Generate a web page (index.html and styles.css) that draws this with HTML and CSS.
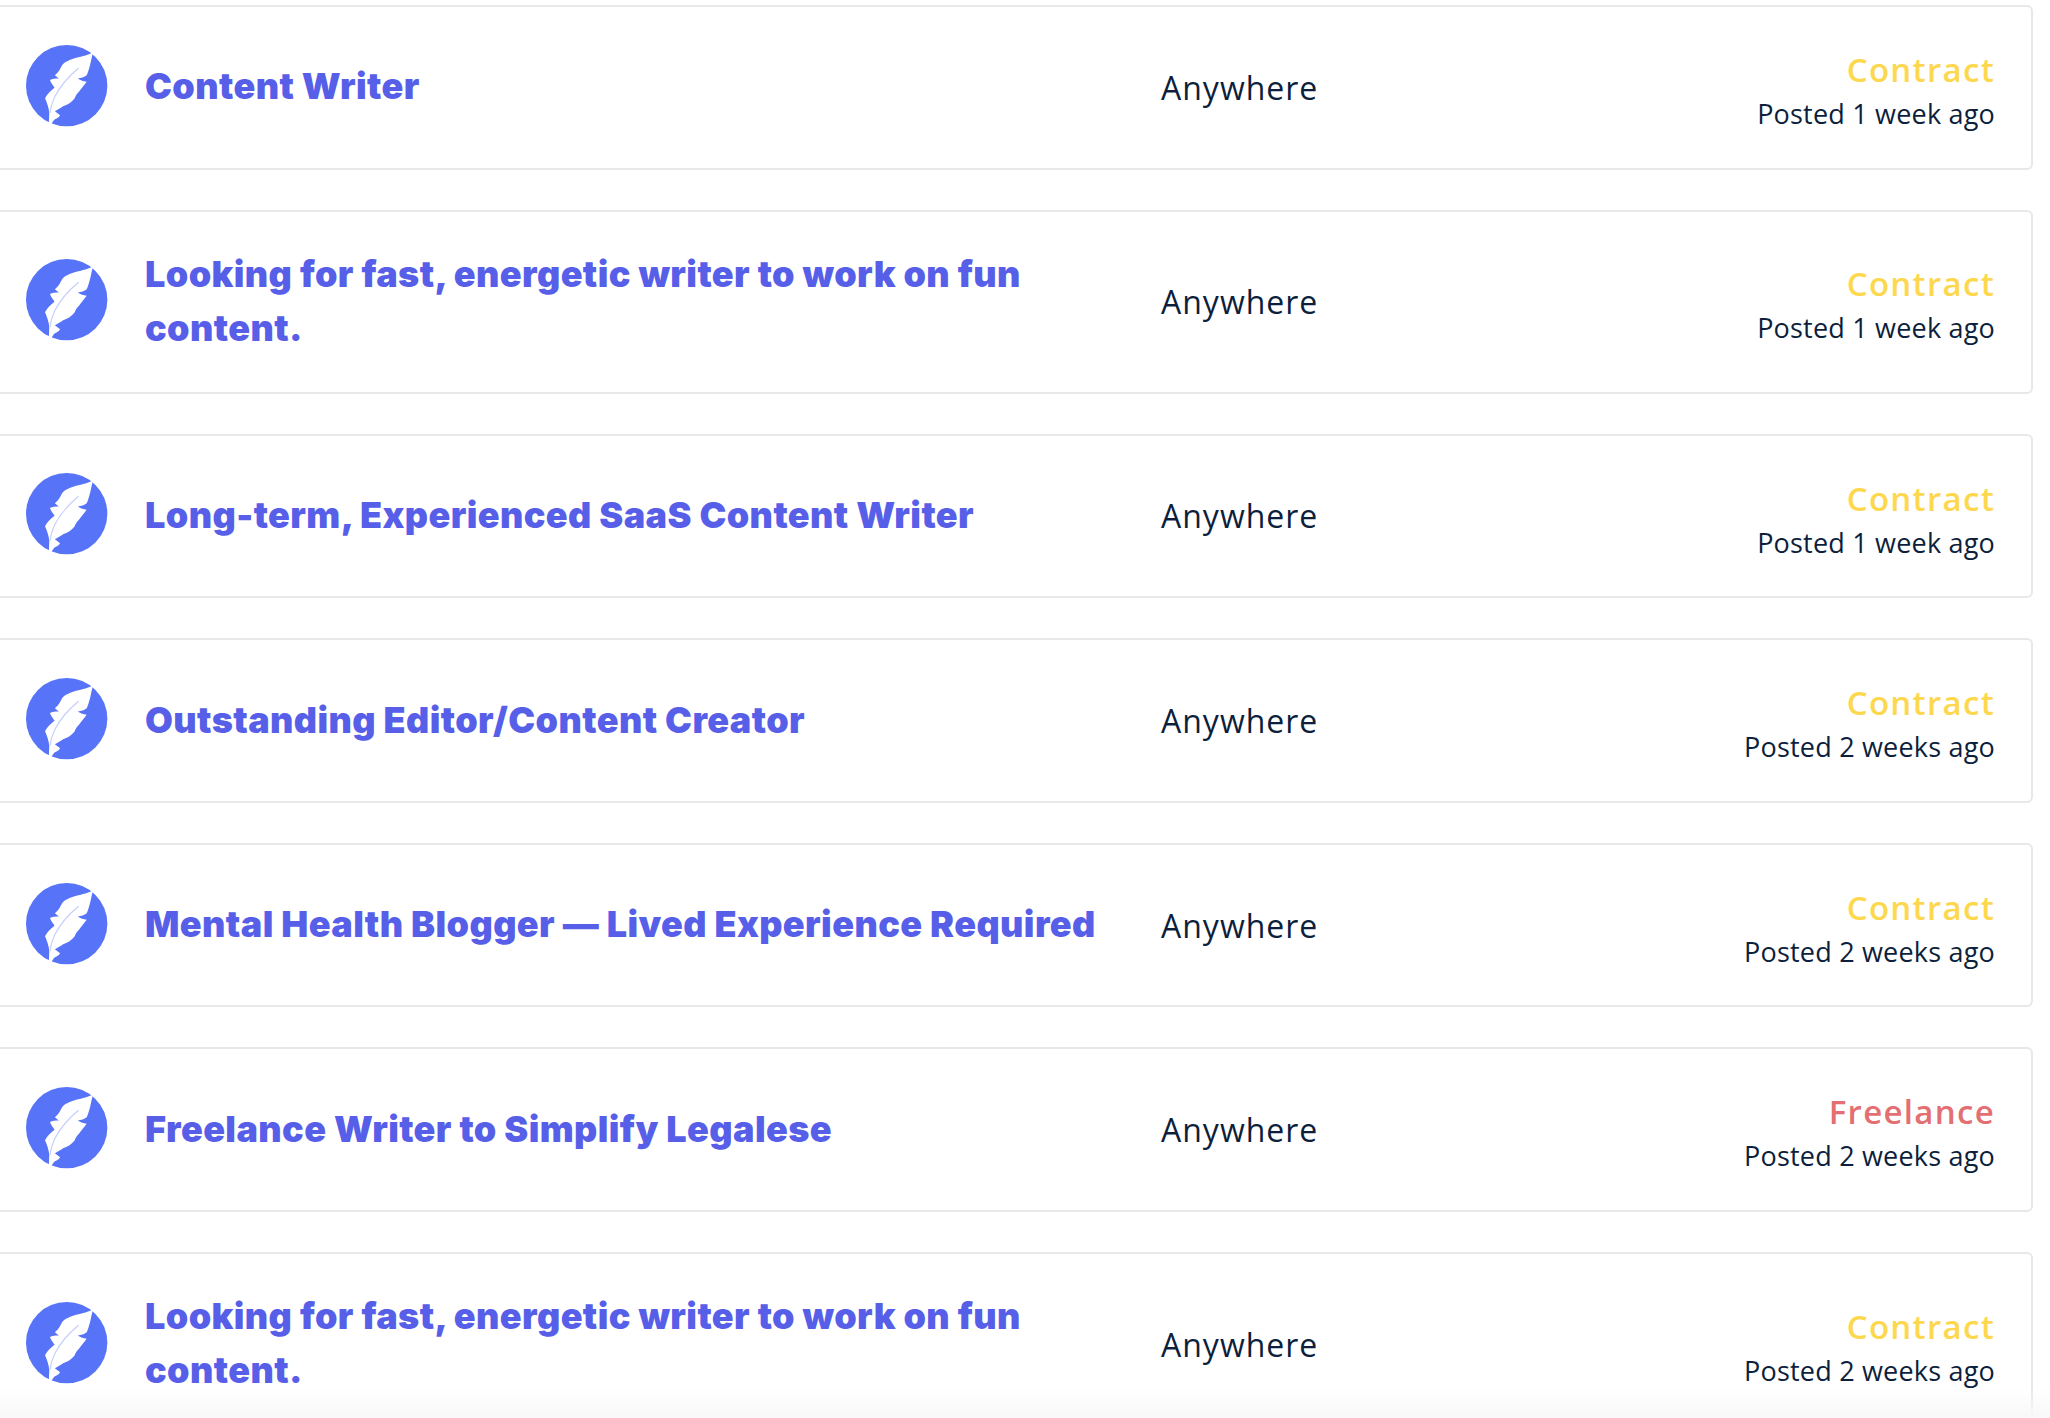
FILE: index.html
```html
<!DOCTYPE html>
<html>
<head>
    <title>Writing Jobs</title>
    <link rel="stylesheet" href="styles.css">
</head>
<body>
    <svg class="sprite" width="0" height="0">
        <symbol id="quill" viewBox="46 44 250 250">
            <circle cx="170" cy="168" r="124" fill="#5773f8"/>
            <path fill="#fff" d="M250 66 C238 74 218 78 199 83 C180 90 164 94 156 106 C150 118 145 128 134 136 L146 146 C136 146 126 146 119 151 C122 160 128 166 133 174 C122 182 110 194 104 206 C110 220 116 236 117 251 L115 296 L121 296 C123 284 127 278 132 272 C136 268 144 268 150 258 L134 246 C146 240 152 236 159 231 C172 226 184 220 194 207 C198 198 202 192 208 186 C214 176 224 166 231 156 C222 154 212 152 204 146 C214 144 224 142 231 136 C240 118 244 92 250 66 Z"/>
            <path fill="none" stroke="#c5cffc" stroke-width="3.5" d="M206 115 C176 140 150 170 134 201 C126 218 121 234 119 251"/>
        </symbol>
    </svg>

    <div class="job-list">
        <div class="job-card">
            <svg class="job-icon"><use href="#quill"/></svg>
            <a class="job-title">Content Writer</a>
            <div class="job-location">Anywhere</div>
            <div class="job-meta">
                <div class="job-type contract">Contract</div>
                <div class="job-date">Posted 1 week ago</div>
            </div>
        </div>
        <div class="job-card">
            <svg class="job-icon"><use href="#quill"/></svg>
            <a class="job-title">Looking for fast, energetic writer to work on fun content.</a>
            <div class="job-location">Anywhere</div>
            <div class="job-meta">
                <div class="job-type contract">Contract</div>
                <div class="job-date">Posted 1 week ago</div>
            </div>
        </div>
        <div class="job-card">
            <svg class="job-icon"><use href="#quill"/></svg>
            <a class="job-title">Long-term, Experienced SaaS Content Writer</a>
            <div class="job-location">Anywhere</div>
            <div class="job-meta">
                <div class="job-type contract">Contract</div>
                <div class="job-date">Posted 1 week ago</div>
            </div>
        </div>
        <div class="job-card">
            <svg class="job-icon"><use href="#quill"/></svg>
            <a class="job-title">Outstanding Editor/Content Creator</a>
            <div class="job-location">Anywhere</div>
            <div class="job-meta">
                <div class="job-type contract">Contract</div>
                <div class="job-date">Posted 2 weeks ago</div>
            </div>
        </div>
        <div class="job-card">
            <svg class="job-icon"><use href="#quill"/></svg>
            <a class="job-title">Mental Health Blogger — Lived Experience Required</a>
            <div class="job-location">Anywhere</div>
            <div class="job-meta">
                <div class="job-type contract">Contract</div>
                <div class="job-date">Posted 2 weeks ago</div>
            </div>
        </div>
        <div class="job-card">
            <svg class="job-icon"><use href="#quill"/></svg>
            <a class="job-title">Freelance Writer to Simplify Legalese</a>
            <div class="job-location">Anywhere</div>
            <div class="job-meta">
                <div class="job-type freelance">Freelance</div>
                <div class="job-date">Posted 2 weeks ago</div>
            </div>
        </div>
        <div class="job-card">
            <svg class="job-icon"><use href="#quill"/></svg>
            <a class="job-title">Looking for fast, energetic writer to work on fun content.</a>
            <div class="job-location">Anywhere</div>
            <div class="job-meta">
                <div class="job-type contract">Contract</div>
                <div class="job-date">Posted 2 weeks ago</div>
            </div>
        </div>
    </div>

    <div class="bottom-fade"></div>
</body>
</html>
```

FILE: styles.css
```css
html, body {
    height: 100%;
    overflow: hidden;
}

body {
    margin: 0;
    background-color: #fff;
    color: #0d1f3c;
    font-family: "Open Sans", sans-serif;
}

.sprite {
    display: block;
    height: 0;
}

.job-list {
    display: flex;
    flex-direction: column;
    gap: 40px;
    width: 2043px;
    margin-left: -10px;
    padding-top: 5px;
}

.job-card {
    display: grid;
    grid-template-columns: 82px 1053px 1fr auto;
    align-items: center;
    padding: 36px 36px 36px 34px;
    border: 2px solid #e8e8e8;
    border-radius: 6px;
    background-color: #fff;
}

.job-icon {
    width: 82px;
    height: 82px;
    overflow: visible;
    margin-top: -3px;
    filter: blur(0.5px);
}

.job-title {
    margin: -1px 0 1px;
    padding-left: 37px;
    padding-right: 60px;
    color: #575fe8;
    font-family: "Inter", sans-serif;
    font-size: 36px;
    font-weight: 900;
    line-height: 54px;
    letter-spacing: 0.4px;
}

.job-location {
    font-size: 32px;
    letter-spacing: 1px;
}

.job-meta {
    text-align: right;
    padding-top: 5px;
    margin-bottom: -3.4px;
}

.job-type {
    font-size: 33px;
    font-weight: 600;
    line-height: 44px;
    letter-spacing: 1.3px;
}

.contract {
    color: #fdd84e;
}

.freelance {
    color: #e36f73;
}

.job-date {
    font-size: 27px;
    line-height: 43px;
    letter-spacing: 0.2px;
}

.bottom-fade {
    position: fixed;
    left: 0;
    right: 0;
    bottom: 0;
    height: 30px;
    background: linear-gradient(rgba(248, 248, 248, 0), #f8f8f8);
}
```
